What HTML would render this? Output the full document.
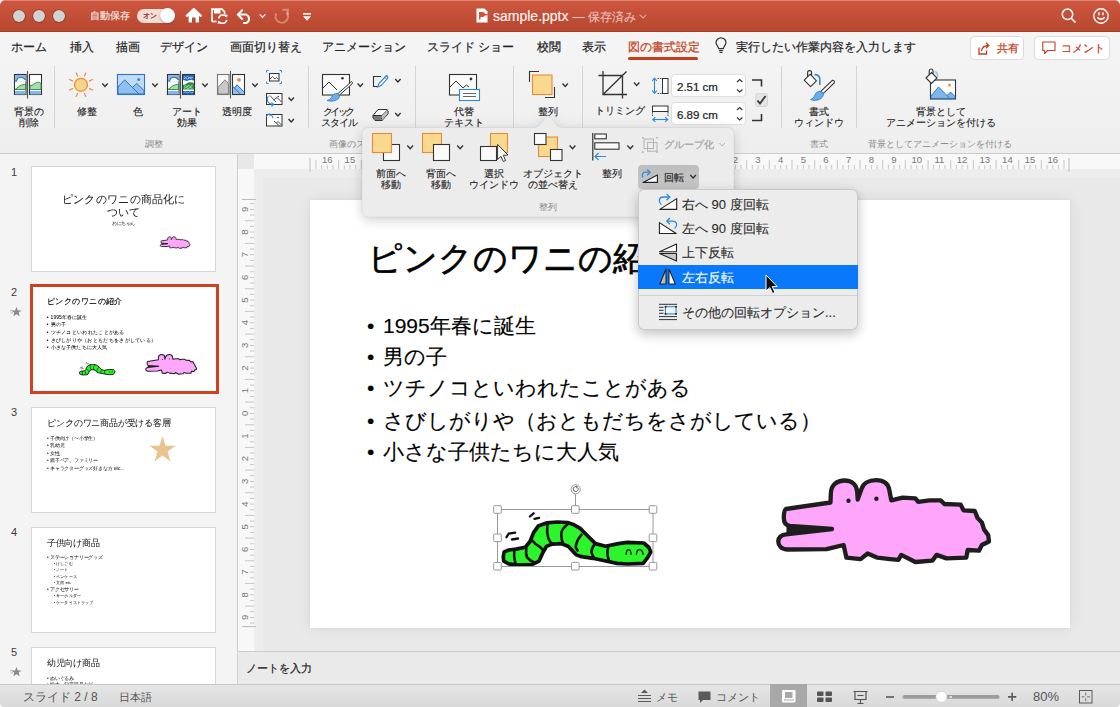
<!DOCTYPE html>
<html><head><meta charset="utf-8">
<style>
*{box-sizing:border-box;margin:0;padding:0}
html,body{width:1120px;height:707px;overflow:hidden;background:#fff;font-family:"Liberation Sans",sans-serif;color:#2b2b2b}
.a,.tab{-webkit-text-stroke:0.22px currentColor}
.lbl{-webkit-text-stroke:0.12px currentColor}
#status .a{-webkit-text-stroke:0}
.sl .a{-webkit-text-stroke:0.15px currentColor}
.a{position:absolute;white-space:nowrap}
svg{position:absolute;overflow:visible}
#title{position:absolute;left:0;top:0;width:1120px;height:32px;background:linear-gradient(#cf573f,#c44f38 45%,#b6472f);border-radius:5px 5px 0 0;box-shadow:inset 0 1px 0 rgba(255,255,255,.28),inset 0 -1px 0 rgba(120,30,10,.25)}
.tl{position:absolute;top:10px;width:12px;height:12px;border-radius:50%;background:#d2d2d2;box-shadow:0 0 0 0.6px rgba(110,30,15,.7)}
#tabs{position:absolute;left:0;top:32px;width:1120px;height:122px;background:linear-gradient(#f5f5f5,#eeeeee);border-bottom:1px solid #cdcdcd}
.tab{position:absolute;top:40px;font-size:12px;line-height:15px;color:#262626}
#ribbon{display:none}
.lbl{position:absolute;font-size:10px;line-height:11px;color:#222;text-align:center;white-space:nowrap}
.glbl{position:absolute;top:139px;font-size:9px;line-height:11px;color:#8a8a8a;white-space:nowrap}
.sep{position:absolute;top:66px;width:1px;height:62px;background:#d4d4d4}
.chev{position:absolute;width:6px;height:6px;border-right:1.4px solid #333;border-bottom:1.4px solid #333;transform:rotate(45deg)}
#left{position:absolute;left:0;top:154px;width:238px;height:531px;background:#f4f4f4;border-right:1px solid #cfcfcf;overflow:hidden}
#editor{position:absolute;left:238px;top:154px;width:882px;height:497px;background:#e9e9e9;overflow:hidden}
#notes{position:absolute;left:238px;top:651px;width:882px;height:33px;background:#eaeaea;border-top:1px solid #cbcbcd}
#status{position:absolute;left:0;top:684px;width:1120px;height:23px;background:linear-gradient(#e5e5e5,#d9d9d9);border-radius:0 0 4px 4px;border-top:1px solid #c9c9c9}
.thumb{position:absolute;left:31px;width:185px;background:#fff;border:1px solid #d0d0d0;overflow:hidden}
.num{position:absolute;left:11px;font-size:11px;line-height:12px;color:#3c3c3c}
.tt{position:absolute;font-size:6px;line-height:7px;color:#222;white-space:nowrap}
.tb{position:absolute;font-size:4px;line-height:7px;color:#333;white-space:nowrap}
</style></head><body>

<!-- ============ TITLE BAR ============ -->
<div id="title">
  <div class="tl" style="left:13px"></div>
  <div class="tl" style="left:33px"></div>
  <div class="tl" style="left:53px"></div>
  <div class="a" style="left:90px;top:10px;font-size:10px;line-height:12px;color:rgba(255,255,255,.82)">自動保存</div>
  <div class="a" style="left:137px;top:9px;width:38px;height:14px;border-radius:7px;background:#f4dcd6"></div>
  <div class="a" style="left:143px;top:11px;font-size:7px;line-height:10px;color:#7a3526">オン</div>
  <div class="a" style="left:160px;top:8px;width:15px;height:15px;border-radius:50%;background:#fff;box-shadow:0 0.5px 1.5px rgba(0,0,0,.45)"></div>
  <!-- home -->
  <svg style="left:0;top:0" width="1120" height="32" viewBox="0 0 1120 32">
   <path d="M186.8 15.8 L193.8 9.2 L200.8 15.8" fill="none" stroke="#fff" stroke-width="2.3" stroke-linecap="round" stroke-linejoin="round"/>
   <path d="M188.6 14.5 L193.8 9.8 L199 14.5 V22.6 H195.6 V17.6 H192 V22.6 H188.6Z" fill="#fff"/>
   <path d="M212 21.5 V9.2 H222 L224.6 11.8 V14.5" fill="none" stroke="#fff" stroke-width="1.7"/>
   <path d="M212 21.5 H216.5" fill="none" stroke="#fff" stroke-width="1.7"/>
   <rect x="214" y="9.5" width="6.5" height="4" fill="#fff"/>
   <path d="M218.6 18.5 A4.3 4.3 0 0 1 226.2 16.6" fill="none" stroke="#fff" stroke-width="1.5"/>
   <path d="M226.8 19.8 A4.3 4.3 0 0 1 219.2 21.7" fill="none" stroke="#fff" stroke-width="1.5"/>
   <path d="M224.6 15 L227.6 14.6 L227 17.8Z M220.6 23.3 L217.6 23.7 L218.2 20.5Z" fill="#fff"/>
   <path d="M238.5 14.6 H246 A4.4 4.4 0 0 1 246 23 H243" fill="none" stroke="#fff" stroke-width="2"/>
   <path d="M242.2 10.2 L237.8 14.6 L242.2 19" fill="none" stroke="#fff" stroke-width="2" stroke-linecap="round" stroke-linejoin="round"/>
   <path d="M259.7 14.3 L262.5 17.3 L265.3 14.3" fill="none" stroke="#fff" stroke-width="1.2"/>
   <path d="M276.3 13.5 A6.2 6.2 0 1 0 286.5 12.5" fill="none" stroke="rgba(255,255,255,.35)" stroke-width="2"/>
   <path d="M282.5 9.8 H287.8 V15" fill="none" stroke="rgba(255,255,255,.35)" stroke-width="2"/>
  </svg>
  <!-- customize -->
  <svg style="left:303px;top:13px" width="8" height="8" viewBox="0 0 8 8"><rect x="0" y="0" width="8" height="1.6" fill="#fff"/><path d="M0 3.2 H8 L4 7.8Z" fill="#fff"/></svg>
  <!-- pptx icon -->
  <svg style="left:476px;top:8px" width="12" height="15" viewBox="0 0 12 15"><path d="M0.5 0.5 H8.5 L11.5 3.5 V14.5 H0.5Z" fill="#fff"/><path d="M3 4 H6.5 A2.5 2.5 0 0 1 6.5 9 H4.5 V11.5 H3Z" fill="#d35230"/><rect x="7.5" y="6" width="4" height="1.4" fill="#d35230"/></svg>
  <div class="a" style="left:493px;top:8px;font-size:14px;line-height:16px;color:rgba(255,255,255,.93)">sample.pptx <span style="font-size:12px;color:rgba(255,255,255,.55)">— 保存済み</span></div>
  <svg style="left:639px;top:14px" width="8" height="5" viewBox="0 0 8 5"><path d="M0.6 0.6 L4 4 L7.4 0.6" fill="none" stroke="rgba(255,255,255,.5)" stroke-width="1.1"/></svg>
  <!-- search -->
  <svg style="left:1060px;top:7px" width="17" height="17" viewBox="0 0 17 17"><circle cx="7.5" cy="7.3" r="5.2" fill="none" stroke="#fff" stroke-width="1.5"/><path d="M11.2 11.2 L15.5 15.5" stroke="#fff" stroke-width="1.6"/></svg>
  <!-- smiley -->
  <svg style="left:1093px;top:8px" width="16" height="16" viewBox="0 0 16 16"><circle cx="8" cy="8" r="7.2" fill="none" stroke="#fff" stroke-width="1.4"/><rect x="5.2" y="4.3" width="1.4" height="3" fill="#fff"/><rect x="9.2" y="4.3" width="1.4" height="3" fill="#fff"/><path d="M4.3 9.2 Q8 13.2 11.7 9.2" fill="none" stroke="#fff" stroke-width="1.4"/></svg>
</div>

<!-- ============ TABS ============ -->
<div id="tabs"></div>
<div class="tab" style="left:11px">ホーム</div>
<div class="tab" style="left:69.5px">挿入</div>
<div class="tab" style="left:115.5px">描画</div>
<div class="tab" style="left:160px">デザイン</div>
<div class="tab" style="left:230px">画面切り替え</div>
<div class="tab" style="left:322px">アニメーション</div>
<div class="tab" style="left:427px">スライド ショー</div>
<div class="tab" style="left:537px">校閲</div>
<div class="tab" style="left:582px">表示</div>
<div class="tab" style="left:628px;color:#c43e1c">図の書式設定</div>
<div class="a" style="left:628px;top:57px;width:70px;height:3px;border-radius:1.5px;background:#c43e1c"></div>
<svg style="left:715px;top:38px" width="12" height="16" viewBox="0 0 12 16"><path d="M3.6 10.5 C3.4 8.2 1 7 1 4.8 A5 5 0 0 1 11 4.8 C11 7 8.6 8.2 8.4 10.5 Z" fill="none" stroke="#333" stroke-width="1.2"/><path d="M3.8 12.3 H8.2 M4.5 14.3 H7.5" stroke="#333" stroke-width="1.2"/></svg>
<div class="tab" style="left:736px">実行したい作業内容を入力します</div>
<div class="a" style="left:970px;top:36px;width:54px;height:24px;background:#fff;border:1px solid #dadada;border-radius:4px"></div>
<div class="a" style="left:1034px;top:36px;width:76px;height:24px;background:#fff;border:1px solid #dadada;border-radius:4px"></div>
<svg style="left:978px;top:41px" width="14" height="14" viewBox="0 0 14 14"><path d="M5 6.5 V13 H12.5 V9.5" fill="none" stroke="#c43e1c" stroke-width="1.3" transform="translate(-4,0)"/><path d="M3.5 10 C4 6 7 4.5 10.5 4.5 M8 1.8 L10.8 4.5 L8 7.2" fill="none" stroke="#c43e1c" stroke-width="1.3"/></svg>
<div class="tab" style="left:996.5px;top:41px;font-size:11px;color:#c43e1c">共有</div>
<svg style="left:1042px;top:41px" width="14" height="14" viewBox="0 0 14 14"><path d="M0.8 1 H13 V9.5 H5.5 L2.5 12.5 V9.5 H0.8 Z" fill="none" stroke="#c43e1c" stroke-width="1.1" stroke-linejoin="round"/></svg>
<div class="tab" style="left:1060.5px;top:41px;font-size:11px;color:#c43e1c">コメント</div>

<!-- ============ RIBBON ============ -->
<div id="ribbon"></div>
<!-- separators -->
<div class="sep" style="left:54px"></div>
<div class="sep" style="left:308px"></div>
<div class="sep" style="left:415px"></div>
<div class="sep" style="left:513px"></div>
<div class="sep" style="left:582px"></div>
<div class="sep" style="left:781px"></div>
<div class="sep" style="left:856px"></div>
<!-- labels -->
<div class="lbl" style="left:9px;top:106px;width:40px">背景の<br>削除</div>
<div class="lbl" style="left:67px;top:106px;width:40px">修整</div>
<div class="lbl" style="left:118px;top:106px;width:40px">色</div>
<div class="lbl" style="left:167px;top:106px;width:40px">アート<br>効果</div>
<div class="lbl" style="left:217px;top:106px;width:40px">透明度</div>
<div class="glbl" style="left:145px">調整</div>
<div class="lbl" style="left:318px;top:106px;width:40px"><span style="letter-spacing:-2.5px;margin-left:-1px">クイック</span><br><span style="letter-spacing:-1px;margin-left:1px">スタイル</span></div>
<div class="glbl" style="left:329px">画像のスタイル</div>
<div class="lbl" style="left:444px;top:106px;width:40px">代替<br>テキスト</div>
<div class="lbl" style="left:528px;top:106px;width:40px">整列</div>
<div class="lbl" style="left:595px;top:105px;width:50px">トリミング</div>
<div class="lbl" style="left:794px;top:106px;width:50px">書式<br>ウィンドウ</div>
<div class="glbl" style="left:810px">書式</div>
<div class="lbl" style="left:881px;top:106px;width:120px">背景として<br>アニメーションを付ける</div>
<div class="glbl" style="left:868px">背景としてアニメーションを付ける</div>
<!-- inputs -->
<div class="a" style="left:671px;top:74px;width:75px;height:23px;background:#fff;border:1px solid #dedede;border-radius:4px"></div>
<div class="a" style="left:671px;top:102px;width:75px;height:23px;background:#fff;border:1px solid #dedede;border-radius:4px"></div>
<div class="a" style="left:677px;top:80.5px;font-size:11.5px;line-height:13px;color:#222">2.51 cm</div>
<div class="a" style="left:677px;top:108.5px;font-size:11.5px;line-height:13px;color:#222">6.89 cm</div>
<div class="a" style="left:755px;top:93px;width:13px;height:14px;background:#e4e4e4;border:1px solid #d4d4d4;border-radius:3px"></div>
<svg style="left:0;top:0" width="1120" height="707" viewBox="0 0 1120 707">
 <g fill="none" stroke-linejoin="miter">
 <!-- 背景の削除 -->
 <rect x="14.5" y="74.5" width="11.5" height="20" fill="#fff" stroke="#333" stroke-width="1.1"/>
 <rect x="15" y="75" width="10.5" height="6.5" fill="#86b8ec"/>
 <path d="M15 81.5 H16.5 Q17.5 77.2 20.8 77.2 Q23.8 77.2 25.5 80 V81.5 Z" fill="#fff"/>
 <path d="M15 81 H16.5 Q17.5 77.2 20.8 77.2 Q23.8 77.2 25.5 80" stroke="#2e74c9" stroke-width="1.1"/>
 <path d="M15 89.5 Q20 84.5 25.5 84 V89.5 Z" fill="#a9dcae" stroke="#2d8a3e" stroke-width="0.9"/>
 <rect x="15" y="91" width="10.5" height="3.5" fill="#86b8ec"/>
 <rect x="29.5" y="74.5" width="12" height="20" fill="#fff" stroke="#333" stroke-width="1.1"/>
 <path d="M30 89.5 V85.5 Q32 85.8 34 84 Q36.5 82 38.5 82.2 Q40 82.4 41 83.5 V89.5 Z" fill="#a9dcae" stroke="#2d8a3e" stroke-width="0.9"/>
 <rect x="30" y="91" width="11" height="3.5" fill="#86b8ec"/>
 <path d="M27.5 71 V98.6" stroke="#555" stroke-width="1.1"/>
 <!-- sun -->
 <circle cx="81" cy="84.8" r="6.5" fill="#f7d58a" stroke="#ed8b3d" stroke-width="1.2"/>
 <g stroke="#ed8b3d" stroke-width="1.2" stroke-linecap="round">
  <path d="M76.2 73 L77.6 76 M85.8 73 L84.4 76 M69.5 79.5 L72.5 80.9 M92.5 79.5 L89.5 80.9 M69.5 90 L72.5 88.6 M92.5 90 L89.5 88.6 M76.2 96.5 L77.6 93.5 M85.8 96.5 L84.4 93.5"/>
 </g>
 <!-- color -->
 <rect x="117.5" y="74.5" width="27" height="20" fill="#c3dcf5" stroke="#2e74c9" stroke-width="1.1"/>
 <path d="M118 87 L124.7 79.8 L132.5 87.5 L136.8 83.5 L144 90.5 V94 H118Z" fill="#8fc0ef" stroke="#2e74c9" stroke-width="1"/>
 <path d="M132.5 87.5 L139 94" stroke="#2e74c9" stroke-width="1"/>
 <circle cx="138.7" cy="79.5" r="1.6" fill="#3b8ad9"/>
 <!-- art effects -->
 <rect x="167.5" y="74.5" width="11.5" height="20" fill="#fff" stroke="#333" stroke-width="1.1"/>
 <rect x="168" y="75" width="10.5" height="6.5" fill="#86b8ec"/>
 <path d="M168 81.5 H169.5 Q170.5 77.2 173.8 77.2 Q176.8 77.2 178.5 80 V81.5 Z" fill="#fff"/>
 <path d="M168 81 H169.5 Q170.5 77.2 173.8 77.2 Q176.8 77.2 178.5 80" stroke="#2e74c9" stroke-width="1.1"/>
 <path d="M168 89.5 Q173 84.5 178.5 84 V89.5 Z" fill="#a9dcae" stroke="#2d8a3e" stroke-width="0.9"/>
 <rect x="168" y="91" width="10.5" height="3.5" fill="#86b8ec"/>
 <rect x="182.5" y="74.5" width="12" height="20" fill="#fff" stroke="#333" stroke-width="1.1"/>
 <path d="M183 75 H194 V80.5 Q190 79.5 187 81 L183 80Z" fill="#1f63b8"/>
 <path d="M184 76.5 l1.5 1 l2 -1 l1.5 1.2 l2 -0.8 l2 1 M183.5 78.8 l2 -0.6 l2 0.8 l2 -1 l2.5 1" stroke="#9cc8f2" stroke-width="0.9"/>
 <path d="M183 89.5 V85 Q186 84 188 82.5 Q191 81.6 194 83 V89.5Z" fill="#2e8a3e"/>
 <path d="M184 86.5 l1.5 -1 l1.5 1.2 l2 -1.3 l1.5 1 l2 -1 M184 88.3 l2 -0.8 l2 1 l2 -1 l2.5 0.8" stroke="#b6e6bd" stroke-width="0.9"/>
 <rect x="183" y="91" width="11" height="3.5" fill="#1f63b8"/>
 <path d="M183.5 92.8 l2 -1 l2 1 l2 -1 l2 1 l2 -1" stroke="#9cc8f2" stroke-width="0.8"/>
 <path d="M180.5 71 V98.6" stroke="#555" stroke-width="1.1"/>
 <!-- transparency -->
 <rect x="217.5" y="74.5" width="11.5" height="20" fill="#fafafa" stroke="#777" stroke-width="1.1"/>
 <path d="M218 87.3 L225 79.8 L228.5 83.5 V94 H218Z" fill="#c8c8c8" stroke="#7a7a7a" stroke-width="0.9"/>
 <rect x="232.5" y="74.5" width="12" height="20" fill="#fafafa" stroke="#333" stroke-width="1.1"/>
 <path d="M233 86.5 L234.5 88 L237 84.8 L244 91.8 V94 H233Z" fill="#8fc0ef"/>
 <path d="M233 86.5 L240 93.8 M234.5 88 L237 84.8 L244 91.8" stroke="#1f6cc4" stroke-width="1"/>
 <circle cx="239" cy="79.8" r="1.9" fill="#ed8b3d"/>
 <path d="M230.5 71 V98.5" stroke="#555" stroke-width="1.1"/>
 <!-- compress -->
 <rect x="269.5" y="73.5" width="9.5" height="7.5" fill="#fff" stroke="#333" stroke-width="1"/>
 <path d="M270 79 L272.5 76.5 L275 79 L276.5 77.5 L278.5 79.5" stroke="#333" stroke-width="0.8"/>
 <path d="M266.5 72.5 V70.5 H268.5 M279.5 70.5 H281.5 V72.5 M266.5 81.5 V83.5 H268.5 M279.5 83.5 H281.5 V81.5" stroke="#2e8ad8" stroke-width="1"/>
 <!-- change picture -->
 <rect x="266.5" y="93.5" width="15.5" height="11" fill="#fff" stroke="#333" stroke-width="1"/>
 <path d="M270 95.5 L276 102 M273.5 100 L277 97.5 L281.5 102" stroke="#333" stroke-width="0.9"/>
 <circle cx="278.2" cy="96.5" r="0.8" fill="#333"/>
 <path d="M268.5 96 Q265.5 100 269.5 103.5 L273 104.5" stroke="#2e8ad8" stroke-width="1.1"/>
 <path d="M271.5 102.5 L273.5 104.5 L271.5 106.5" stroke="#2e8ad8" stroke-width="1.1"/>
 <!-- reset picture -->
 <rect x="266.5" y="114.5" width="15.5" height="11.5" fill="#fff" stroke="#333" stroke-width="1"/>
 <path d="M274 121 L279.5 126 M276.5 123 L278 121.5 L281.5 125" stroke="#333" stroke-width="0.9"/>
 <circle cx="278" cy="117.5" r="0.8" fill="#333"/>
 <path d="M268 114.5 Q271.5 113 273 118" stroke="#2e8ad8" stroke-width="1.1"/>
 <path d="M266.2 116.8 L268 114.2 L270.8 115.5" stroke="#2e8ad8" stroke-width="1.1"/>
 <!-- quick styles -->
 <rect x="322.5" y="74.5" width="27" height="20.5" fill="#fafafa" stroke="#333" stroke-width="1.1"/>
 <path d="M323 88 L329 82 L337 90" stroke="#333" stroke-width="1"/>
 <circle cx="342.5" cy="78.3" r="1.3" fill="#333"/>
 <path d="M351.5 81.5 Q353 82.5 352 84 L339 95.5 L337.5 94 Z" fill="#fff" stroke="#333" stroke-width="1"/>
 <path d="M337.5 93.5 Q333 93 331.5 97.5 Q330 100 327 100.5 Q334 102.5 338.5 98.5 Q340 96.5 339 95Z" fill="#6aaee8" stroke="#2e7fd0" stroke-width="0.9"/>
 <!-- pen border -->
 <path d="M377.5 86.5 H373.5 V76.5 H381" stroke="#333" stroke-width="1.1"/>
 <path d="M386.5 75.5 Q388.5 76.5 387.5 78.5 L381 85.5 L377.5 87 L379 83.5 Z" fill="#fff" stroke="#2e7fd0" stroke-width="1.1"/>
 <path d="M384.5 77 L386.5 79" stroke="#2e7fd0" stroke-width="1"/>
 <!-- eraser -->
 <path d="M373 115.5 L378 109.5 H387 L388 112 L382.5 118.5 H374Z" fill="#fafafa" stroke="#333" stroke-width="1"/>
 <path d="M373 115.5 H382 L388 109.5 M382 115.5 V121 M373 115.5 V118 L375 120.5 H382 L388 114 V111" stroke="#333" stroke-width="1"/>
 <path d="M382 116 L387.5 110 V114 L382 120Z" fill="#bdbdbd"/>
 <path d="M373.5 116 H381.5 V120 H375 L373.5 118Z" fill="#7a7a7a"/>
 <!-- alt text -->
 <rect x="449.5" y="74.5" width="27" height="20.5" fill="#fafafa" stroke="#333" stroke-width="1.1"/>
 <path d="M450 87 L456 81 L463 88 L466.5 85 L469 87" stroke="#333" stroke-width="1"/>
 <circle cx="471" cy="79" r="1.4" fill="#333"/>
 <rect x="459.5" y="89.5" width="20" height="11" fill="#fff" stroke="#2e8ad8" stroke-width="1.1"/>
 <path d="M463 93.5 H476 M463 96.5 H476" stroke="#555" stroke-width="0.9"/>
 <!-- arrange -->
 <path d="M529.5 82 V71.5 H539" stroke="#333" stroke-width="1.1"/>
 <path d="M554.5 87 V97.5 H545" stroke="#333" stroke-width="1.1"/>
 <rect x="532.5" y="75" width="19.5" height="19.5" fill="#f9d98d" stroke="#ea8a38" stroke-width="1.1"/>
 <!-- crop -->
 <path d="M603 71 V94.5 H627 M598.5 75.5 H622.5 V98.5 M603 94.5 L626.5 71.5" stroke="#333" stroke-width="1.3"/>
 <!-- height -->
 <path d="M654.5 78.5 V93" stroke="#2e8ad8" stroke-width="1.1"/>
 <path d="M652.2 80.8 L654.5 78.2 L656.8 80.8 M652.2 90.7 L654.5 93.3 L656.8 90.7" stroke="#2e8ad8" stroke-width="1.1"/>
 <rect x="662.5" y="78.5" width="5.5" height="15" fill="#fff" stroke="#333" stroke-width="1"/>
 <path d="M657.5 78.5 H662 M657.5 93.5 H662" stroke="#333" stroke-width="0.9" stroke-dasharray="1.5 1"/>
 <!-- width -->
 <rect x="652.5" y="106" width="15.5" height="5.5" fill="#fff" stroke="#333" stroke-width="1"/>
 <path d="M652.5 112 V116 M668 112 V116" stroke="#333" stroke-width="0.9" stroke-dasharray="1.5 1"/>
 <path d="M653 119.5 H667.5" stroke="#2e8ad8" stroke-width="1.1"/>
 <path d="M655.3 117.2 L652.8 119.5 L655.3 121.8 M665.2 117.2 L667.7 119.5 L665.2 121.8" stroke="#2e8ad8" stroke-width="1.1"/>
 <!-- spinners -->
 <path d="M737 82 L739.7 79.5 L742.4 82 M737 89.5 L739.7 92 L742.4 89.5 M737 110 L739.7 107.5 L742.4 110 M737 117.5 L739.7 120 L742.4 117.5" stroke="#333" stroke-width="1.1"/>
 <!-- lock brackets -->
 <path d="M752 80 H761.5 V86.5 M752 120.5 H761.5 V114" stroke="#333" stroke-width="1.6"/>
 <path d="M757.5 100.5 L760 103.5 L765.5 96" stroke="#333" stroke-width="1.8"/>
 <!-- format pane -->
 <path d="M804.2 80.2 L810.2 74.2 L816.4 80.8 L810.6 86.6 Z" fill="#fff" stroke="#333" stroke-width="1.1" stroke-linejoin="round"/>
 <path d="M807.6 77 V72.6 Q807.6 70.6 809.6 70.6 Q811.6 70.6 811.6 72.6 V75.6" fill="none" stroke="#333" stroke-width="1.1"/>
 <path d="M814.5 74.6 Q819.8 74.6 819.8 79.5 V85" fill="none" stroke="#2e8ad8" stroke-width="1.6"/>
 <path d="M832.6 80.2 Q835 80.6 834.2 83 L823.2 93.6 L820.8 91.4 Z" fill="#fff" stroke="#333" stroke-width="1.1"/>
 <path d="M820.8 91.2 Q816 91 814.6 95.8 Q813.6 98.6 810.6 99.6 Q817.6 101.8 822 97.6 Q823.8 95.4 823.2 93.6Z" fill="#6aaee8" stroke="#2e7fd0" stroke-width="0.9"/>
 <!-- bg animation -->
 <rect x="930.5" y="80" width="25" height="19" fill="#fff" stroke="#333" stroke-width="1.1"/>
 <path d="M931 96 L938.5 87 L947 95.5 L950.5 92 L955 96.5 V98.5 H931Z" fill="#7cb6ee" stroke="#2e74c9" stroke-width="1"/>
 <path d="M947 95.5 L950 98.5" stroke="#2e74c9" stroke-width="1"/>
 <circle cx="949.5" cy="85" r="1.5" fill="#ed8b3d"/>
 <path d="M926 78 L931.5 72.5 L937 78 L931.5 83.5 Z" fill="#fff" stroke="#333" stroke-width="1.1"/>
 <path d="M929.2 74.8 V71 Q929.2 69 931 69 Q933 69 933 71 V74" stroke="#333" stroke-width="1.1"/>
 <path d="M934.5 72 Q938 71.5 937.5 77" stroke="#8fc4f0" stroke-width="1.5"/>
 </g>
 <!-- chevrons -->
 <g fill="none" stroke="#333" stroke-width="1.4">
  <path d="M102.3 83.5 L105 86.5 L107.7 83.5"/>
  <path d="M152.3 83.5 L155 86.5 L157.7 83.5"/>
  <path d="M202.3 83.5 L205 86.5 L207.7 83.5"/>
  <path d="M252.3 83.5 L255 86.5 L257.7 83.5"/>
  <path d="M288.5 97.5 L291.2 100.5 L293.9 97.5"/>
  <path d="M288.5 119 L291.2 122 L293.9 119"/>
  <path d="M357.6 83.5 L360.3 86.5 L363 83.5"/>
  <path d="M395.2 79 L397.9 82 L400.6 79"/>
  <path d="M395.2 113 L397.9 116 L400.6 113"/>
  <path d="M562.5 83.5 L565.2 86.5 L567.9 83.5"/>
  <path d="M634 82.5 L636.7 85.5 L639.4 82.5"/>
 </g>
</svg>


<!-- ============ LEFT PANEL ============ -->
<div id="left">
<div class="num" style="top:12px">1</div><div class="a" style="left:31px;top:12px;width:185px;height:106px;border:1.5px solid #d6d6d6;background:#fff;overflow:hidden"><div class="a sl" style="left:0;top:0;width:760px;height:428px;transform:scale(0.2408);transform-origin:0 0"><div class="a" style="left:0;top:105px;width:760px;text-align:center;font-size:46px;line-height:54px;color:#222">ピンクのワニの商品化に<br>ついて</div>
<div class="a" style="left:0;top:225px;width:760px;text-align:center;font-size:19px;line-height:22px;color:#333">わにちゃん</div>
<svg style="left:0;top:0" width="760" height="428" viewBox="310 200 760 428"><g transform="translate(842 488) scale(0.585) translate(-777 -477)"><path d="M786 509 L830.5 502.5 L830.8 494 C830.8 484.5 837.5 480.5 844.5 480.5 C852 480.5 856.8 485 857.2 492 L857.7 499.5 L861.5 489 C863 483.5 868.5 480.2 876 480.2 C884 480.2 888.3 484 889.3 490 L891.3 500.4 L902.6 497.6 L915.4 498.3 L918.2 501.8 L929.5 500.4 L940.8 500.4 L944.4 504 L960.7 504.7 L963.5 510.3 L974.8 511 L977.6 518.1 L981.9 522.4 L984 529.4 L988.2 535.1 L989 541.5 L981.9 545 L979 550.7 L967.7 550 L966.3 557.7 L946.5 558.4 L936.6 554.9 L932.4 560.6 L915.4 562 L901.2 554.9 L898.4 559.9 L890 559.1 L877.5 557.7 L867.6 553.5 L860.6 559.1 L846.4 557.7 L843.6 545 L826.6 549.2 L788 549.5 C781.5 549.5 778 545.5 778.3 541 C778.6 536.8 781.5 535 786 534.3 L832 529 L790 526 C785.5 525.5 783.6 522 783.8 517 C784 512 784.8 509.6 786 509 Z" fill="#fda6fa" stroke="#1e1e1e" stroke-width="6" stroke-linejoin="round"/><path d="M787 526.8 L832 528.9 L787 533.6Z" fill="#1e1e1e" stroke="#1e1e1e" stroke-width="1" stroke-linejoin="round"/><circle cx="848.5" cy="500.8" r="2.2" fill="#1e1e1e"/><circle cx="876.4" cy="498.7" r="2.2" fill="#1e1e1e"/></g></svg></div></div>
<div class="num" style="top:132px">2</div><svg style="left:10px;top:153px" width="12" height="10" viewBox="0 0 12 10"><polygon points="6.5,0 7.9,3.4 11.5,3.6 8.7,5.8 9.7,9.3 6.5,7.3 3.3,9.3 4.3,5.8 1.5,3.6 5.1,3.4" fill="#8a8a8a"/><path d="M0 3.8 H3 M0.5 6 H3" stroke="#9a9a9a" stroke-width="0.6"/></svg><div class="a" style="left:30px;top:130px;width:189px;height:110px;border:3px solid #d0421f;background:#fff;overflow:hidden"><div class="a sl" style="left:0;top:0;width:760px;height:428px;transform:scale(0.2408);transform-origin:0 0"><div class="a" style="left:58px;top:37.5px;font-size:34px;line-height:40px;color:#000;-webkit-text-stroke:0.6px #000">ピンクのワニの紹介</div>
<div class="a" style="left:57px;top:112.5px;font-size:21px;line-height:26px;color:#000">•</div>
<div class="a" style="left:73px;top:112.5px;font-size:21px;line-height:26px;color:#000">1995年春に誕生</div>
<div class="a" style="left:57px;top:143.6px;font-size:21px;line-height:26px;color:#000">•</div>
<div class="a" style="left:73px;top:143.6px;font-size:21px;line-height:26px;color:#000">男の子</div>
<div class="a" style="left:57px;top:175.2px;font-size:21px;line-height:26px;color:#000">•</div>
<div class="a" style="left:73px;top:175.2px;font-size:21px;line-height:26px;color:#000">ツチノコといわれたことがある</div>
<div class="a" style="left:57px;top:207.7px;font-size:21px;line-height:26px;color:#000">•</div>
<div class="a" style="left:73px;top:207.7px;font-size:21px;line-height:26px;color:#000">さびしがりや（おともだちをさがしている）</div>
<div class="a" style="left:57px;top:239.3px;font-size:21px;line-height:26px;color:#000">•</div>
<div class="a" style="left:73px;top:239.3px;font-size:21px;line-height:26px;color:#000">小さな子供たちに大人気</div>
<svg style="left:0;top:0" width="760" height="428" viewBox="310 200 760 428"><path d="M786 509 L830.5 502.5 L830.8 494 C830.8 484.5 837.5 480.5 844.5 480.5 C852 480.5 856.8 485 857.2 492 L857.7 499.5 L861.5 489 C863 483.5 868.5 480.2 876 480.2 C884 480.2 888.3 484 889.3 490 L891.3 500.4 L902.6 497.6 L915.4 498.3 L918.2 501.8 L929.5 500.4 L940.8 500.4 L944.4 504 L960.7 504.7 L963.5 510.3 L974.8 511 L977.6 518.1 L981.9 522.4 L984 529.4 L988.2 535.1 L989 541.5 L981.9 545 L979 550.7 L967.7 550 L966.3 557.7 L946.5 558.4 L936.6 554.9 L932.4 560.6 L915.4 562 L901.2 554.9 L898.4 559.9 L890 559.1 L877.5 557.7 L867.6 553.5 L860.6 559.1 L846.4 557.7 L843.6 545 L826.6 549.2 L788 549.5 C781.5 549.5 778 545.5 778.3 541 C778.6 536.8 781.5 535 786 534.3 L832 529 L790 526 C785.5 525.5 783.6 522 783.8 517 C784 512 784.8 509.6 786 509 Z" fill="#fda6fa" stroke="#1e1e1e" stroke-width="4.3" stroke-linejoin="round"/><path d="M787 526.8 L832 528.9 L787 533.6Z" fill="#1e1e1e" stroke="#1e1e1e" stroke-width="1" stroke-linejoin="round"/><circle cx="848.5" cy="500.8" r="2.2" fill="#1e1e1e"/><circle cx="876.4" cy="498.7" r="2.2" fill="#1e1e1e"/><polygon points="503.3,556.5 504.2,551.9 508.8,550.0 516.1,549.1 525.3,547.3 529.9,541.8 533.6,532.6 538.2,526.1 546.5,522.9 557.5,522.0 567.6,522.5 574.0,524.8 580.2,528.4 586.5,534.7 595.5,543.6 605.6,546.2 618.4,543.6 627.3,542.4 643.8,543.0 648.9,547.5 650.8,551.9 647.6,557.6 643.2,563.4 627.3,564.0 617.1,563.4 608.2,561.5 592.9,558.3 580.2,556.4 575.9,554.6 568.5,546.4 561.2,543.6 552.0,544.1 546.5,546.4 542.8,552.8 539.1,561.1 531.8,564.7 518.0,565.2 508.8,563.8 503.7,561.1" fill="#2cf52c" stroke="#111" stroke-width="3.7" stroke-linejoin="round"/><g fill="none" stroke="#111" stroke-width="2.6" stroke-linecap="round"><path d="M514.3 550 Q513.5 557 515.5 563.4"/><path d="M526.3 548.2 Q525.5 554 527 557.4 Q530 561 534.5 562.5"/><path d="M531.8 540 Q535 544 539.1 546.4 Q541.5 548 542.8 550"/><path d="M547.4 524.3 Q546.5 532 548.3 538.1 Q549.5 541.5 552 543.6"/><path d="M567.6 524.3 Q561.5 529 561.2 534 Q561.5 540 563 543.6"/><path d="M581.5 534.7 Q576 541 575.7 547.5 L577.6 550.6"/><path d="M594.2 544.9 Q591 549 591.6 552.6 Q592.5 556 594.2 557.6"/><path d="M608.2 546.8 Q607 551 607.6 555.1 Q608 559 609.5 561.5"/><path d="M626.2 554.3 Q626.5 549.6 628.6 549.6 Q630.8 549.6 631 554.3 M636.4 554.3 Q636.7 549.6 639.5 549.6 Q642.5 549.6 643 554.3" stroke-width="1.3"/><path d="M529.9 516.5 L533.6 513.3 M534.5 518.8 L539.1 517.9 M506.5 537.2 L508.8 533.5 L515.2 532.6 M512 539.5 L518 538.5" stroke-width="2.3"/></g></svg></div></div>
<div class="num" style="top:252px">3</div><div class="a" style="left:31px;top:252.5px;width:185px;height:106px;border:1.5px solid #d6d6d6;background:#fff;overflow:hidden"><div class="a sl" style="left:0;top:0;width:760px;height:428px;transform:scale(0.2408);transform-origin:0 0"><div class="a" style="left:62px;top:40px;font-size:36px;line-height:44px;color:#222">ピンクのワニ商品が受ける客層</div>
<div class="a" style="left:62px;top:112px;font-size:20px;line-height:26px;color:#222">• 子供向け（〜小学生）</div>
<div class="a" style="left:62px;top:143px;font-size:20px;line-height:26px;color:#222">• 乳幼児</div>
<div class="a" style="left:62px;top:174px;font-size:20px;line-height:26px;color:#222">• 女性</div>
<div class="a" style="left:62px;top:205px;font-size:20px;line-height:26px;color:#222">• 親子ペア、ファミリー</div>
<div class="a" style="left:62px;top:236px;font-size:20px;line-height:26px;color:#222">• キャラクターグッズ好きな方 etc...</div>
<svg style="left:0;top:0" width="760" height="428" viewBox="0 0 760 428"><polygon points="542,117 555,157 596,157 563,181 575,222 542,197 509,222 521,181 488,157 529,157" fill="#eac48f"/></svg></div></div>
<div class="num" style="top:372px">4</div><div class="a" style="left:31px;top:372.7px;width:185px;height:106px;border:1.5px solid #d6d6d6;background:#fff;overflow:hidden"><div class="a sl" style="left:0;top:0;width:760px;height:428px;transform:scale(0.2408);transform-origin:0 0"><div class="a" style="left:62px;top:40px;font-size:36px;line-height:44px;color:#222">子供向け商品</div>
<div class="a" style="left:62px;top:108px;font-size:20px;line-height:26px;color:#222">• ステーショナリーグッズ</div>
<div class="a" style="left:90px;top:135px;font-size:17px;line-height:26px;color:#222">• けしごむ</div>
<div class="a" style="left:90px;top:162px;font-size:17px;line-height:26px;color:#222">• ノート</div>
<div class="a" style="left:90px;top:189px;font-size:17px;line-height:26px;color:#222">• ペンケース</div>
<div class="a" style="left:90px;top:216px;font-size:17px;line-height:26px;color:#222">• 文房 etc</div>
<div class="a" style="left:62px;top:243px;font-size:20px;line-height:26px;color:#222">• アクセサリー</div>
<div class="a" style="left:90px;top:270px;font-size:17px;line-height:26px;color:#222">• キーホルダー</div>
<div class="a" style="left:90px;top:297px;font-size:17px;line-height:26px;color:#222">• ケータイストラップ</div></div></div>
<div class="num" style="top:492px">5</div><svg style="left:10px;top:513px" width="12" height="10" viewBox="0 0 12 10"><polygon points="6.5,0 7.9,3.4 11.5,3.6 8.7,5.8 9.7,9.3 6.5,7.3 3.3,9.3 4.3,5.8 1.5,3.6 5.1,3.4" fill="#8a8a8a"/><path d="M0 3.8 H3 M0.5 6 H3" stroke="#9a9a9a" stroke-width="0.6"/></svg><div class="a" style="left:31px;top:492.5px;width:185px;height:106px;border:1.5px solid #d6d6d6;background:#fff;overflow:hidden"><div class="a sl" style="left:0;top:0;width:760px;height:428px;transform:scale(0.2408);transform-origin:0 0"><div class="a" style="left:62px;top:40px;font-size:36px;line-height:44px;color:#222">幼児向け商品</div>
<div class="a" style="left:62px;top:112px;font-size:20px;line-height:26px;color:#222">• ぬいぐるみ</div>
<div class="a" style="left:62px;top:139px;font-size:20px;line-height:26px;color:#222">• 絵本、知育玩具など</div></div></div>
</div>

<!-- ============ EDITOR ============ -->
<div id="editor">
<div class="a" style="left:0;top:0;width:16px;height:15px;background:#e8e8e8"></div>
<div class="a" style="left:16px;top:0;width:866px;height:15px;background:#f8f8f8"></div>
<div class="a" style="left:0;top:15px;width:16px;height:482px;background:#f8f8f8"></div>
<div class="a" style="left:16px;top:15px;width:866px;height:9px;background:#ededed"></div>
<div class="a" style="left:16px;top:15px;width:9px;height:482px;background:#ededed"></div>
<svg style="left:0;top:0" width="882" height="497" viewBox="0 0 882 497">
<g fill="#c6c6c6"><rect x="77.44" y="6" width="1" height="9"/><rect x="83.11" y="11" width="1" height="4"/><rect x="88.78" y="11" width="1" height="4"/><rect x="94.45" y="11" width="1" height="4"/><rect x="100.11" y="6" width="1" height="9"/><rect x="105.78" y="11" width="1" height="4"/><rect x="111.45" y="11" width="1" height="4"/><rect x="117.12" y="11" width="1" height="4"/><rect x="122.78" y="6" width="1" height="9"/><rect x="128.45" y="11" width="1" height="4"/><rect x="134.12" y="11" width="1" height="4"/><rect x="139.79" y="11" width="1" height="4"/><rect x="145.45" y="6" width="1" height="9"/><rect x="151.12" y="11" width="1" height="4"/><rect x="156.79" y="11" width="1" height="4"/><rect x="162.46" y="11" width="1" height="4"/><rect x="168.12" y="6" width="1" height="9"/><rect x="173.79" y="11" width="1" height="4"/><rect x="179.46" y="11" width="1" height="4"/><rect x="185.13" y="11" width="1" height="4"/><rect x="190.79" y="6" width="1" height="9"/><rect x="196.46" y="11" width="1" height="4"/><rect x="202.13" y="11" width="1" height="4"/><rect x="207.80" y="11" width="1" height="4"/><rect x="213.46" y="6" width="1" height="9"/><rect x="219.13" y="11" width="1" height="4"/><rect x="224.80" y="11" width="1" height="4"/><rect x="230.47" y="11" width="1" height="4"/><rect x="236.13" y="6" width="1" height="9"/><rect x="241.80" y="11" width="1" height="4"/><rect x="247.47" y="11" width="1" height="4"/><rect x="253.14" y="11" width="1" height="4"/><rect x="258.80" y="6" width="1" height="9"/><rect x="264.47" y="11" width="1" height="4"/><rect x="270.14" y="11" width="1" height="4"/><rect x="275.81" y="11" width="1" height="4"/><rect x="281.48" y="6" width="1" height="9"/><rect x="287.14" y="11" width="1" height="4"/><rect x="292.81" y="11" width="1" height="4"/><rect x="298.48" y="11" width="1" height="4"/><rect x="304.14" y="6" width="1" height="9"/><rect x="309.81" y="11" width="1" height="4"/><rect x="315.48" y="11" width="1" height="4"/><rect x="321.15" y="11" width="1" height="4"/><rect x="326.81" y="6" width="1" height="9"/><rect x="332.48" y="11" width="1" height="4"/><rect x="338.15" y="11" width="1" height="4"/><rect x="343.82" y="11" width="1" height="4"/><rect x="349.49" y="6" width="1" height="9"/><rect x="355.15" y="11" width="1" height="4"/><rect x="360.82" y="11" width="1" height="4"/><rect x="366.49" y="11" width="1" height="4"/><rect x="372.15" y="6" width="1" height="9"/><rect x="377.82" y="11" width="1" height="4"/><rect x="383.49" y="11" width="1" height="4"/><rect x="389.16" y="11" width="1" height="4"/><rect x="394.82" y="6" width="1" height="9"/><rect x="400.49" y="11" width="1" height="4"/><rect x="406.16" y="11" width="1" height="4"/><rect x="411.83" y="11" width="1" height="4"/><rect x="417.50" y="6" width="1" height="9"/><rect x="423.16" y="11" width="1" height="4"/><rect x="428.83" y="11" width="1" height="4"/><rect x="434.50" y="11" width="1" height="4"/><rect x="440.17" y="6" width="1" height="9"/><rect x="445.83" y="11" width="1" height="4"/><rect x="451.50" y="11" width="1" height="4"/><rect x="457.17" y="11" width="1" height="4"/><rect x="462.83" y="6" width="1" height="9"/><rect x="468.50" y="11" width="1" height="4"/><rect x="474.17" y="11" width="1" height="4"/><rect x="479.84" y="11" width="1" height="4"/><rect x="485.50" y="6" width="1" height="9"/><rect x="491.17" y="11" width="1" height="4"/><rect x="496.84" y="11" width="1" height="4"/><rect x="502.51" y="11" width="1" height="4"/><rect x="508.18" y="6" width="1" height="9"/><rect x="513.84" y="11" width="1" height="4"/><rect x="519.51" y="11" width="1" height="4"/><rect x="525.18" y="11" width="1" height="4"/><rect x="530.85" y="6" width="1" height="9"/><rect x="536.51" y="11" width="1" height="4"/><rect x="542.18" y="11" width="1" height="4"/><rect x="547.85" y="11" width="1" height="4"/><rect x="553.51" y="6" width="1" height="9"/><rect x="559.18" y="11" width="1" height="4"/><rect x="564.85" y="11" width="1" height="4"/><rect x="570.52" y="11" width="1" height="4"/><rect x="576.18" y="6" width="1" height="9"/><rect x="581.85" y="11" width="1" height="4"/><rect x="587.52" y="11" width="1" height="4"/><rect x="593.19" y="11" width="1" height="4"/><rect x="598.86" y="6" width="1" height="9"/><rect x="604.52" y="11" width="1" height="4"/><rect x="610.19" y="11" width="1" height="4"/><rect x="615.86" y="11" width="1" height="4"/><rect x="621.52" y="6" width="1" height="9"/><rect x="627.19" y="11" width="1" height="4"/><rect x="632.86" y="11" width="1" height="4"/><rect x="638.53" y="11" width="1" height="4"/><rect x="644.20" y="6" width="1" height="9"/><rect x="649.86" y="11" width="1" height="4"/><rect x="655.53" y="11" width="1" height="4"/><rect x="661.20" y="11" width="1" height="4"/><rect x="666.87" y="6" width="1" height="9"/><rect x="672.53" y="11" width="1" height="4"/><rect x="678.20" y="11" width="1" height="4"/><rect x="683.87" y="11" width="1" height="4"/><rect x="689.54" y="6" width="1" height="9"/><rect x="695.20" y="11" width="1" height="4"/><rect x="700.87" y="11" width="1" height="4"/><rect x="706.54" y="11" width="1" height="4"/><rect x="712.21" y="6" width="1" height="9"/><rect x="717.87" y="11" width="1" height="4"/><rect x="723.54" y="11" width="1" height="4"/><rect x="729.21" y="11" width="1" height="4"/><rect x="734.88" y="6" width="1" height="9"/><rect x="740.54" y="11" width="1" height="4"/><rect x="746.21" y="11" width="1" height="4"/><rect x="751.88" y="11" width="1" height="4"/><rect x="757.55" y="6" width="1" height="9"/><rect x="763.21" y="11" width="1" height="4"/><rect x="768.88" y="11" width="1" height="4"/><rect x="774.55" y="11" width="1" height="4"/><rect x="780.22" y="6" width="1" height="9"/><rect x="785.88" y="11" width="1" height="4"/><rect x="791.55" y="11" width="1" height="4"/><rect x="797.22" y="11" width="1" height="4"/><rect x="802.88" y="6" width="1" height="9"/><rect x="808.55" y="11" width="1" height="4"/><rect x="814.22" y="11" width="1" height="4"/><rect x="819.89" y="11" width="1" height="4"/><rect x="825.56" y="6" width="1" height="9"/><rect x="12" y="49.20" width="4" height="1"/><rect x="12" y="54.87" width="4" height="1"/><rect x="12" y="60.54" width="4" height="1"/><rect x="7" y="66.20" width="9" height="1"/><rect x="12" y="71.87" width="4" height="1"/><rect x="12" y="77.54" width="4" height="1"/><rect x="12" y="83.21" width="4" height="1"/><rect x="7" y="88.87" width="9" height="1"/><rect x="12" y="94.54" width="4" height="1"/><rect x="12" y="100.21" width="4" height="1"/><rect x="12" y="105.88" width="4" height="1"/><rect x="7" y="111.54" width="9" height="1"/><rect x="12" y="117.21" width="4" height="1"/><rect x="12" y="122.88" width="4" height="1"/><rect x="12" y="128.55" width="4" height="1"/><rect x="7" y="134.21" width="9" height="1"/><rect x="12" y="139.88" width="4" height="1"/><rect x="12" y="145.55" width="4" height="1"/><rect x="12" y="151.22" width="4" height="1"/><rect x="7" y="156.88" width="9" height="1"/><rect x="12" y="162.55" width="4" height="1"/><rect x="12" y="168.22" width="4" height="1"/><rect x="12" y="173.89" width="4" height="1"/><rect x="7" y="179.55" width="9" height="1"/><rect x="12" y="185.22" width="4" height="1"/><rect x="12" y="190.89" width="4" height="1"/><rect x="12" y="196.56" width="4" height="1"/><rect x="7" y="202.22" width="9" height="1"/><rect x="12" y="207.89" width="4" height="1"/><rect x="12" y="213.56" width="4" height="1"/><rect x="12" y="219.23" width="4" height="1"/><rect x="7" y="224.89" width="9" height="1"/><rect x="12" y="230.56" width="4" height="1"/><rect x="12" y="236.23" width="4" height="1"/><rect x="12" y="241.90" width="4" height="1"/><rect x="7" y="247.56" width="9" height="1"/><rect x="12" y="253.23" width="4" height="1"/><rect x="12" y="258.90" width="4" height="1"/><rect x="12" y="264.57" width="4" height="1"/><rect x="7" y="270.23" width="9" height="1"/><rect x="12" y="275.90" width="4" height="1"/><rect x="12" y="281.57" width="4" height="1"/><rect x="12" y="287.24" width="4" height="1"/><rect x="7" y="292.90" width="9" height="1"/><rect x="12" y="298.57" width="4" height="1"/><rect x="12" y="304.24" width="4" height="1"/><rect x="12" y="309.91" width="4" height="1"/><rect x="7" y="315.57" width="9" height="1"/><rect x="12" y="321.24" width="4" height="1"/><rect x="12" y="326.91" width="4" height="1"/><rect x="12" y="332.58" width="4" height="1"/><rect x="7" y="338.25" width="9" height="1"/><rect x="12" y="343.91" width="4" height="1"/><rect x="12" y="349.58" width="4" height="1"/><rect x="12" y="355.25" width="4" height="1"/><rect x="7" y="360.91" width="9" height="1"/><rect x="12" y="366.58" width="4" height="1"/><rect x="12" y="372.25" width="4" height="1"/><rect x="12" y="377.92" width="4" height="1"/><rect x="7" y="383.58" width="9" height="1"/><rect x="12" y="389.25" width="4" height="1"/><rect x="12" y="394.92" width="4" height="1"/><rect x="12" y="400.59" width="4" height="1"/><rect x="7" y="406.25" width="9" height="1"/><rect x="12" y="411.92" width="4" height="1"/><rect x="12" y="417.59" width="4" height="1"/><rect x="12" y="423.26" width="4" height="1"/><rect x="7" y="428.92" width="9" height="1"/><rect x="12" y="434.59" width="4" height="1"/><rect x="12" y="440.26" width="4" height="1"/><rect x="12" y="445.93" width="4" height="1"/><rect x="7" y="451.60" width="9" height="1"/><rect x="12" y="457.26" width="4" height="1"/><rect x="12" y="462.93" width="4" height="1"/><rect x="12" y="468.60" width="4" height="1"/></g>
<rect x="71.5" y="4" width="1" height="14" fill="#bbbbbb"/><rect x="830.5" y="4" width="1" height="14" fill="#bbbbbb"/>
<rect x="4" y="45.0" width="14" height="1" fill="#bbbbbb"/><rect x="4" y="472.1" width="14" height="1" fill="#bbbbbb"/>
<g font-family="Liberation Sans" font-size="9.5" fill="#777"><text x="89.3" y="9" text-anchor="middle">16</text><text x="111.9" y="9" text-anchor="middle">15</text><text x="134.6" y="9" text-anchor="middle">14</text><text x="157.3" y="9" text-anchor="middle">13</text><text x="180.0" y="9" text-anchor="middle">12</text><text x="202.6" y="9" text-anchor="middle">11</text><text x="225.3" y="9" text-anchor="middle">10</text><text x="248.0" y="9" text-anchor="middle">9</text><text x="270.6" y="9" text-anchor="middle">8</text><text x="293.3" y="9" text-anchor="middle">7</text><text x="316.0" y="9" text-anchor="middle">6</text><text x="338.6" y="9" text-anchor="middle">5</text><text x="361.3" y="9" text-anchor="middle">4</text><text x="384.0" y="9" text-anchor="middle">3</text><text x="406.7" y="9" text-anchor="middle">2</text><text x="429.3" y="9" text-anchor="middle">1</text><text x="452.0" y="9" text-anchor="middle">0</text><text x="474.7" y="9" text-anchor="middle">1</text><text x="497.3" y="9" text-anchor="middle">2</text><text x="520.0" y="9" text-anchor="middle">3</text><text x="542.7" y="9" text-anchor="middle">4</text><text x="565.4" y="9" text-anchor="middle">5</text><text x="588.0" y="9" text-anchor="middle">6</text><text x="610.7" y="9" text-anchor="middle">7</text><text x="633.4" y="9" text-anchor="middle">8</text><text x="656.0" y="9" text-anchor="middle">9</text><text x="678.7" y="9" text-anchor="middle">10</text><text x="701.4" y="9" text-anchor="middle">11</text><text x="724.0" y="9" text-anchor="middle">12</text><text x="746.7" y="9" text-anchor="middle">13</text><text x="769.4" y="9" text-anchor="middle">14</text><text x="792.0" y="9" text-anchor="middle">15</text><text x="814.7" y="9" text-anchor="middle">16</text><text transform="translate(9.6 55.4) rotate(-90)" text-anchor="middle">9</text><text transform="translate(9.6 78.0) rotate(-90)" text-anchor="middle">8</text><text transform="translate(9.6 100.7) rotate(-90)" text-anchor="middle">7</text><text transform="translate(9.6 123.4) rotate(-90)" text-anchor="middle">6</text><text transform="translate(9.6 146.0) rotate(-90)" text-anchor="middle">5</text><text transform="translate(9.6 168.7) rotate(-90)" text-anchor="middle">4</text><text transform="translate(9.6 191.4) rotate(-90)" text-anchor="middle">3</text><text transform="translate(9.6 214.1) rotate(-90)" text-anchor="middle">2</text><text transform="translate(9.6 236.7) rotate(-90)" text-anchor="middle">1</text><text transform="translate(9.6 259.4) rotate(-90)" text-anchor="middle">0</text><text transform="translate(9.6 282.1) rotate(-90)" text-anchor="middle">1</text><text transform="translate(9.6 304.7) rotate(-90)" text-anchor="middle">2</text><text transform="translate(9.6 327.4) rotate(-90)" text-anchor="middle">3</text><text transform="translate(9.6 350.1) rotate(-90)" text-anchor="middle">4</text><text transform="translate(9.6 372.8) rotate(-90)" text-anchor="middle">5</text><text transform="translate(9.6 395.4) rotate(-90)" text-anchor="middle">6</text><text transform="translate(9.6 418.1) rotate(-90)" text-anchor="middle">7</text><text transform="translate(9.6 440.8) rotate(-90)" text-anchor="middle">8</text><text transform="translate(9.6 463.4) rotate(-90)" text-anchor="middle">9</text></g>
</svg><div class="a sl" style="left:72px;top:46px;width:760px;height:428px;background:#fff;box-shadow:0 0 16px rgba(0,0,0,.07),0 0 3px rgba(0,0,0,.05)"><div class="a" style="left:58px;top:37.5px;font-size:34px;line-height:40px;color:#000;-webkit-text-stroke:0.6px #000">ピンクのワニの紹介</div>
<div class="a" style="left:57px;top:112.5px;font-size:21px;line-height:26px;color:#000">•</div>
<div class="a" style="left:73px;top:112.5px;font-size:21px;line-height:26px;color:#000">1995年春に誕生</div>
<div class="a" style="left:57px;top:143.6px;font-size:21px;line-height:26px;color:#000">•</div>
<div class="a" style="left:73px;top:143.6px;font-size:21px;line-height:26px;color:#000">男の子</div>
<div class="a" style="left:57px;top:175.2px;font-size:21px;line-height:26px;color:#000">•</div>
<div class="a" style="left:73px;top:175.2px;font-size:21px;line-height:26px;color:#000">ツチノコといわれたことがある</div>
<div class="a" style="left:57px;top:207.7px;font-size:21px;line-height:26px;color:#000">•</div>
<div class="a" style="left:73px;top:207.7px;font-size:21px;line-height:26px;color:#000">さびしがりや（おともだちをさがしている）</div>
<div class="a" style="left:57px;top:239.3px;font-size:21px;line-height:26px;color:#000">•</div>
<div class="a" style="left:73px;top:239.3px;font-size:21px;line-height:26px;color:#000">小さな子供たちに大人気</div>
<svg style="left:0;top:0" width="760" height="428" viewBox="310 200 760 428"><path d="M786 509 L830.5 502.5 L830.8 494 C830.8 484.5 837.5 480.5 844.5 480.5 C852 480.5 856.8 485 857.2 492 L857.7 499.5 L861.5 489 C863 483.5 868.5 480.2 876 480.2 C884 480.2 888.3 484 889.3 490 L891.3 500.4 L902.6 497.6 L915.4 498.3 L918.2 501.8 L929.5 500.4 L940.8 500.4 L944.4 504 L960.7 504.7 L963.5 510.3 L974.8 511 L977.6 518.1 L981.9 522.4 L984 529.4 L988.2 535.1 L989 541.5 L981.9 545 L979 550.7 L967.7 550 L966.3 557.7 L946.5 558.4 L936.6 554.9 L932.4 560.6 L915.4 562 L901.2 554.9 L898.4 559.9 L890 559.1 L877.5 557.7 L867.6 553.5 L860.6 559.1 L846.4 557.7 L843.6 545 L826.6 549.2 L788 549.5 C781.5 549.5 778 545.5 778.3 541 C778.6 536.8 781.5 535 786 534.3 L832 529 L790 526 C785.5 525.5 783.6 522 783.8 517 C784 512 784.8 509.6 786 509 Z" fill="#fda6fa" stroke="#1e1e1e" stroke-width="4.3" stroke-linejoin="round"/><path d="M787 526.8 L832 528.9 L787 533.6Z" fill="#1e1e1e" stroke="#1e1e1e" stroke-width="1" stroke-linejoin="round"/><circle cx="848.5" cy="500.8" r="2.2" fill="#1e1e1e"/><circle cx="876.4" cy="498.7" r="2.2" fill="#1e1e1e"/><polygon points="503.3,556.5 504.2,551.9 508.8,550.0 516.1,549.1 525.3,547.3 529.9,541.8 533.6,532.6 538.2,526.1 546.5,522.9 557.5,522.0 567.6,522.5 574.0,524.8 580.2,528.4 586.5,534.7 595.5,543.6 605.6,546.2 618.4,543.6 627.3,542.4 643.8,543.0 648.9,547.5 650.8,551.9 647.6,557.6 643.2,563.4 627.3,564.0 617.1,563.4 608.2,561.5 592.9,558.3 580.2,556.4 575.9,554.6 568.5,546.4 561.2,543.6 552.0,544.1 546.5,546.4 542.8,552.8 539.1,561.1 531.8,564.7 518.0,565.2 508.8,563.8 503.7,561.1" fill="#2cf52c" stroke="#111" stroke-width="3.7" stroke-linejoin="round"/><g fill="none" stroke="#111" stroke-width="2.6" stroke-linecap="round"><path d="M514.3 550 Q513.5 557 515.5 563.4"/><path d="M526.3 548.2 Q525.5 554 527 557.4 Q530 561 534.5 562.5"/><path d="M531.8 540 Q535 544 539.1 546.4 Q541.5 548 542.8 550"/><path d="M547.4 524.3 Q546.5 532 548.3 538.1 Q549.5 541.5 552 543.6"/><path d="M567.6 524.3 Q561.5 529 561.2 534 Q561.5 540 563 543.6"/><path d="M581.5 534.7 Q576 541 575.7 547.5 L577.6 550.6"/><path d="M594.2 544.9 Q591 549 591.6 552.6 Q592.5 556 594.2 557.6"/><path d="M608.2 546.8 Q607 551 607.6 555.1 Q608 559 609.5 561.5"/><path d="M626.2 554.3 Q626.5 549.6 628.6 549.6 Q630.8 549.6 631 554.3 M636.4 554.3 Q636.7 549.6 639.5 549.6 Q642.5 549.6 643 554.3" stroke-width="1.3"/><path d="M529.9 516.5 L533.6 513.3 M534.5 518.8 L539.1 517.9 M506.5 537.2 L508.8 533.5 L515.2 532.6 M512 539.5 L518 538.5" stroke-width="2.3"/></g><g fill="none" stroke="#9a9a9a" stroke-width="1"><rect x="497.5" y="509.5" width="155.5" height="57"/><path d="M575.5 494 V509"/><circle cx="575.7" cy="489.3" r="4.6" fill="#fff"/></g><path d="M578 488 A2.5 2.5 0 1 1 576.5 486.7" fill="none" stroke="#666" stroke-width="1"/><path d="M576 485.6 L578.2 486.9 L576.4 488.5" fill="#666"/><rect x="493.7" y="505.7" width="7.6" height="7.6" rx="1" fill="#fff" stroke="#8d8d8d" stroke-width="0.9"/><rect x="493.7" y="534.0" width="7.6" height="7.6" rx="1" fill="#fff" stroke="#8d8d8d" stroke-width="0.9"/><rect x="493.7" y="562.4" width="7.6" height="7.6" rx="1" fill="#fff" stroke="#8d8d8d" stroke-width="0.9"/><rect x="571.5" y="505.7" width="7.6" height="7.6" rx="1" fill="#fff" stroke="#8d8d8d" stroke-width="0.9"/><rect x="571.5" y="562.4" width="7.6" height="7.6" rx="1" fill="#fff" stroke="#8d8d8d" stroke-width="0.9"/><rect x="649.2" y="505.7" width="7.6" height="7.6" rx="1" fill="#fff" stroke="#8d8d8d" stroke-width="0.9"/><rect x="649.2" y="534.0" width="7.6" height="7.6" rx="1" fill="#fff" stroke="#8d8d8d" stroke-width="0.9"/><rect x="649.2" y="562.4" width="7.6" height="7.6" rx="1" fill="#fff" stroke="#8d8d8d" stroke-width="0.9"/></svg></div>
</div>

<div id="notes"><div class="a" style="left:8px;top:10px;font-size:11px;line-height:13px;color:#1e1e1e">ノートを入力</div></div>
<div id="status">
<div class="a" style="left:23px;top:5px;font-size:12px;line-height:14px;color:#555">スライド 2 / 8</div>
<div class="a" style="left:119px;top:5px;font-size:11px;line-height:14px;color:#555">日本語</div>
<div class="a" style="left:770px;top:-1px;width:37px;height:23px;background:#a8a8a8"></div>
<div class="a" style="left:656px;top:5px;font-size:11px;line-height:14px;color:#555">メモ</div>
<div class="a" style="left:716px;top:5px;font-size:11px;line-height:14px;color:#555">コメント</div>
<div class="a" style="left:1033px;top:4px;font-size:13px;line-height:15px;color:#555">80%</div>
<svg style="left:0;top:-684px" width="1120" height="707" viewBox="0 0 1120 707">
 <g fill="none" stroke="#5a5a5a" stroke-width="1.1">
  <path d="M638 694.5 H651 M638 697.5 H651 M638 700.5 H651"/>
 </g>
 <path d="M644.5 688.5 L648 692 H641Z" fill="#5a5a5a"/>
 <path d="M698.5 690.5 H710.5 V699 H703 L700 702 V699 H698.5Z" fill="#5a5a5a"/>
 <rect x="782" y="689" width="13.5" height="12.5" rx="1" fill="#fff"/>
 <rect x="785" y="691" width="7.5" height="6" fill="#a8a8a8"/>
 <rect x="784" y="698.5" width="10" height="1" fill="#a8a8a8"/>
 <g fill="#555"><rect x="817" y="690.5" width="6.5" height="4.5" rx="1"/><rect x="825.5" y="690.5" width="6.5" height="4.5" rx="1"/><rect x="817" y="696.5" width="6.5" height="4.5" rx="1"/><rect x="825.5" y="696.5" width="6.5" height="4.5" rx="1"/></g>
 <g fill="none" stroke="#555" stroke-width="1.2"><path d="M853.5 690.5 H867.5 M855 690.5 V698.5 H866 V690.5 M860.5 698.5 V702.5 M857.5 702.5 H863.5"/><path d="M857.5 694.5 H863.5" stroke-width="1"/></g>
 <rect x="886" y="695.2" width="8" height="1.6" fill="#5a5a5a"/>
 <rect x="902.5" y="694" width="97" height="3.8" rx="1.9" fill="#9c9c9c"/>
 <rect x="949.5" y="695" width="2.5" height="2" fill="#ddd"/>
 <circle cx="941.4" cy="695.8" r="5.6" fill="#fff" stroke="#c4c4c4" stroke-width="0.6"/>
 <path d="M1008 695.9 H1016.3 M1012.1 691.8 V700" stroke="#5a5a5a" stroke-width="1.6"/>
 <rect x="1079.5" y="689.5" width="12.5" height="12.5" fill="none" stroke="#5a5a5a" stroke-width="1"/>
 <path d="M1085.7 691.5 V694.5 M1085.7 697 V700 M1081.5 695.8 H1084.5 M1087 695.8 H1090" stroke="#5a5a5a" stroke-width="0.8"/>
</svg>

</div>

<!-- arrange popup -->
<svg style="left:0;top:0;filter:drop-shadow(0 3px 6px rgba(0,0,0,.18))" width="1120" height="707" viewBox="0 0 1120 707">
 <path d="M368 127.5 H534.5 C541 127.5 544 116 548.2 116 C552.4 116 555.4 127.5 562 127.5 H728 A6 6 0 0 1 734 133.5 V211 A6 6 0 0 1 728 217 H368 A6 6 0 0 1 362 211 V133.5 A6 6 0 0 1 368 127.5Z" fill="#ececec" stroke="rgba(0,0,0,.10)" stroke-width="0.6"/>
</svg>
<div class="a" style="left:638px;top:165px;width:61px;height:23.5px;background:linear-gradient(#bdbdbd,#c7c7c7);border-radius:4px"></div>
<div class="lbl" style="left:371px;top:168px;width:40px">前面へ<br>移動</div>
<div class="lbl" style="left:421px;top:168px;width:40px">背面へ<br>移動</div>
<div class="lbl" style="left:466px;top:168px;width:56px">選択<br>ウインドウ</div>
<div class="lbl" style="left:520px;top:168px;width:66px">オブジェクト<br>の並べ替え</div>
<div class="lbl" style="left:592px;top:168px;width:40px">整列</div>
<div class="a" style="left:664px;top:139px;font-size:10px;line-height:11px;color:#a2a2a2">グループ化</div>
<div class="a" style="left:664px;top:172px;font-size:10px;line-height:11px;color:#2a2a2a">回転</div>
<div class="glbl" style="left:539px;top:202px">整列</div>
<svg style="left:0;top:0" width="1120" height="707" viewBox="0 0 1120 707">
 <g stroke-width="1.1">
  <rect x="383.5" y="144.5" width="16" height="16" fill="#fafafa" stroke="#333"/>
  <rect x="372.5" y="133.5" width="19" height="19" fill="#f9d98d" stroke="#ea8a38"/>
  <rect x="422.5" y="133.5" width="19" height="19" fill="#f9d98d" stroke="#ea8a38"/>
  <rect x="433.5" y="144.5" width="16" height="16" fill="#fafafa" stroke="#333"/>
  <rect x="490.5" y="133.5" width="17" height="19" fill="#f9d98d" stroke="#ea8a38"/>
  <rect x="480.5" y="146.5" width="16" height="14" fill="#fafafa" stroke="#333"/>
  <path d="M497.6 144.5 V159.5 L501 156.3 L503.3 161.5 L505.6 160.5 L503.3 155.3 L508 155Z" fill="#fff" stroke="#333" stroke-width="1" stroke-linejoin="round"/>
  <rect x="538.5" y="137" width="19" height="19.5" fill="#f9d98d" stroke="#ea8a38"/>
  <rect x="534.5" y="133.5" width="11.5" height="11" fill="#fafafa" stroke="#333"/>
  <rect x="550.5" y="149.5" width="11.5" height="11" fill="#fafafa" stroke="#333"/>
  <path d="M592.8 133 V160.5" stroke="#333" stroke-width="1.2"/>
  <rect x="594.8" y="134" width="11.5" height="4.8" fill="#fafafa" stroke="#333"/>
  <rect x="594.8" y="142.8" width="24.2" height="6.4" fill="#fafafa" stroke="#333"/>
  <path d="M595 156.5 H606 M598.5 153 L595 156.5 L598.5 160" fill="none" stroke="#2e8ad8" stroke-width="1.2"/>
 </g>
 <g fill="none" stroke="#b2b2b2" stroke-width="1">
  <rect x="644" y="139" width="9.5" height="9.5"/><rect x="647.6" y="142.4" width="9.4" height="8.8"/>
  <path d="M642 137.8 h1.6 M656.2 137.8 h1.6 M642 152.1 h1.6 M656.2 152.1 h1.6" stroke-width="1.6"/>
  <path d="M719.5 143 L722.2 146 L724.9 143"/>
 </g>
 <g fill="none" stroke="#333" stroke-width="1.4">
  <path d="M407.3 145.5 L410.2 148.7 L413.1 145.5"/>
  <path d="M457.2 145.5 L460.1 148.7 L463 145.5"/>
  <path d="M569.6 145.5 L572.5 148.7 L575.4 145.5"/>
  <path d="M627.4 145.5 L630.3 148.7 L633.2 145.5"/>
  <path d="M690.3 175 L693.1 178 L695.9 175"/>
 </g>
 <path d="M643 182.4 L657.4 175 V182.4Z" fill="#fff" stroke="#222" stroke-width="1.1" stroke-linejoin="round"/>
 <path d="M642.9 177.6 C641.5 174.5 642.8 172.2 645.5 172.2 H650" fill="none" stroke="#2e8ad8" stroke-width="1.3"/>
 <path d="M647.2 169.4 L650.2 172.2 L647.2 175.2" fill="none" stroke="#2e8ad8" stroke-width="1.3"/>
</svg>

<!-- rotate menu -->
<div class="a" style="left:638px;top:189px;width:219.5px;height:140.5px;background:#ececec;border-radius:6px;border:0.5px solid rgba(0,0,0,.14);box-shadow:0 4px 12px rgba(0,0,0,.25)"></div>
<div class="a" style="left:638px;top:265px;width:219.5px;height:24px;background:#0a78fa"></div>
<div class="a" style="left:638px;top:295px;width:219px;height:1px;background:#d2d2d2"></div>
<div class="a" style="left:682px;top:198px;font-size:13px;line-height:14px;color:#2a2a2a;-webkit-text-stroke:0.1px">右へ 90 度回転</div>
<div class="a" style="left:682px;top:222px;font-size:13px;line-height:14px;color:#2a2a2a;-webkit-text-stroke:0.1px">左へ 90 度回転</div>
<div class="a" style="left:682px;top:246px;font-size:13px;line-height:14px;color:#2a2a2a;-webkit-text-stroke:0.1px">上下反転</div>
<div class="a" style="left:682px;top:270.5px;font-size:13px;line-height:14px;color:#fff;-webkit-text-stroke:0.1px #fff">左右反転</div>
<div class="a" style="left:682px;top:305.5px;font-size:13px;line-height:14px;color:#2a2a2a;-webkit-text-stroke:0.1px">その他の回転オプション...</div>
<svg style="left:0;top:0" width="1120" height="707" viewBox="0 0 1120 707">
 <path d="M659.8 209.4 L676.7 198.6 V209.4Z" fill="#fff" stroke="#222" stroke-width="1.1" stroke-linejoin="round"/>
 <path d="M661.3 204.6 C658 201.5 658.8 197 663.5 197 H669.3" fill="none" stroke="#2e8ad8" stroke-width="1.3"/>
 <path d="M666.5 193.9 L669.7 197 L666.5 200.2" fill="none" stroke="#2e8ad8" stroke-width="1.3"/>
 <path d="M659.4 222.6 V233.5 H676.2Z" fill="#fff" stroke="#222" stroke-width="1.1" stroke-linejoin="round"/>
 <path d="M674.6 228.6 C677.9 225.5 677.2 221.1 672.5 221.1 H667" fill="none" stroke="#2e8ad8" stroke-width="1.3"/>
 <path d="M669.9 218 L666.8 221.1 L669.9 224.3" fill="none" stroke="#2e8ad8" stroke-width="1.3"/>
 <path d="M659.6 251.8 L676.5 244 V251.8Z" fill="#fff" stroke="#222" stroke-width="1.1" stroke-linejoin="round"/>
 <path d="M659.6 253.5 L676.5 261 V253.5Z" fill="#c8c8c8" stroke="#222" stroke-width="1.1" stroke-linejoin="round"/>
 <path d="M666 269 V284 H659.8Z" fill="#bdbdbd" stroke="#222" stroke-width="1.1" stroke-linejoin="round"/>
 <path d="M669 269 V284 H675.3Z" fill="#fff" stroke="#222" stroke-width="1.1" stroke-linejoin="round"/>
 <g fill="none" stroke="#333" stroke-width="1"><path d="M659 304.3 H677 M659 316.6 H677 M659 319.6 H677 M659 307.3 H663.5 M659 310.3 H663.5 M659 313.3 H663.5"/></g>
 <rect x="665.5" y="306.7" width="10.5" height="7.2" fill="#f4f4f4" stroke="#2e8ad8" stroke-width="1.1"/>
 <g fill="#222"><rect x="664.7" y="305.9" width="1.7" height="1.7"/><rect x="675.2" y="305.9" width="1.7" height="1.7"/><rect x="664.7" y="313.1" width="1.7" height="1.7"/><rect x="675.2" y="313.1" width="1.7" height="1.7"/></g>
 <!-- cursor -->
 <path d="M766 275 V291 L769.8 287.6 L772.6 293.5 L775 292.4 L772.3 286.6 L777.2 286.5Z" fill="#111" stroke="#fff" stroke-width="1" stroke-linejoin="round"/>
</svg>


</body></html>
